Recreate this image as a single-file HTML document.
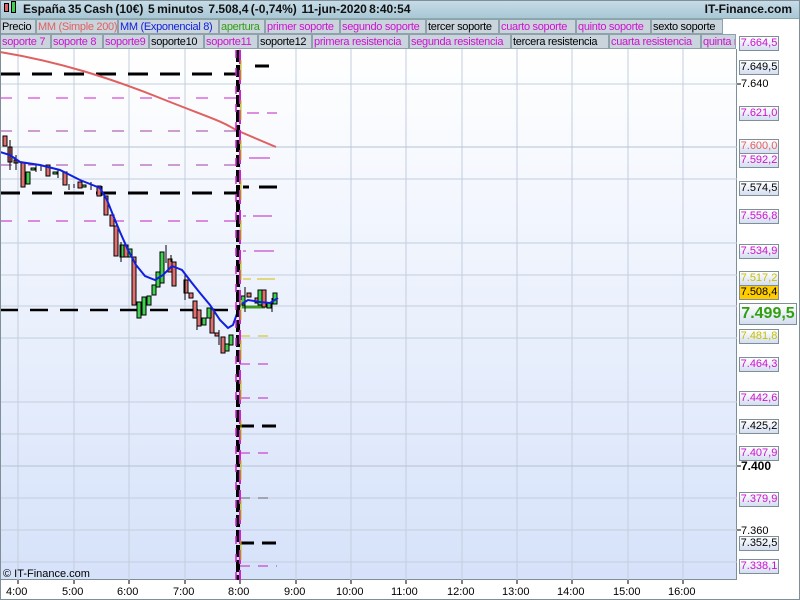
<!DOCTYPE html>
<html><head><meta charset="utf-8"><style>
*{margin:0;padding:0;box-sizing:border-box}
body{width:800px;height:600px;overflow:hidden;background:#fff;font-family:"Liberation Sans",sans-serif;position:relative}
#hdr{position:absolute;left:0;top:0;width:800px;height:19px;background:linear-gradient(#c8dde8,#a9c7d6);font-weight:bold;font-size:12px;line-height:19px;color:#111;border-bottom:1px solid #8aa}
.lg{position:absolute;height:15px;font-size:11px;line-height:14px;background:#c9d4dc;border:1px solid #8fa1ab;padding-left:1px;white-space:nowrap;overflow:hidden;letter-spacing:-0.3px}
.ax{position:absolute;left:739px;width:40px;height:15px;border:1px solid #7f8f99;background:linear-gradient(#fff,#d4def0);font-size:11px;line-height:13px;text-align:center}
.tl{position:absolute;left:741px;font-size:11px;line-height:12px}
.bt{position:absolute;top:586px;font-size:11px}
</style></head><body>
<div style="position:absolute;left:0;top:49px;width:737px;height:531px;background:linear-gradient(#ffffff,#d6e2fa);border-right:1px solid #7f8f99;border-bottom:1px solid #7f8f99"></div>
<svg style="position:absolute;left:0;top:0" width="800" height="600">
<g stroke="#c4cede" stroke-width="1">
<line x1="18" y1="49" x2="18" y2="580"/><line x1="74" y1="49" x2="74" y2="580"/><line x1="129" y1="49" x2="129" y2="580"/><line x1="185" y1="49" x2="185" y2="580"/><line x1="240" y1="49" x2="240" y2="580"/><line x1="296" y1="49" x2="296" y2="580"/><line x1="351" y1="49" x2="351" y2="580"/><line x1="406" y1="49" x2="406" y2="580"/><line x1="462" y1="49" x2="462" y2="580"/><line x1="517" y1="49" x2="517" y2="580"/><line x1="572" y1="49" x2="572" y2="580"/><line x1="628" y1="49" x2="628" y2="580"/><line x1="683" y1="49" x2="683" y2="580"/>
<line x1="0" y1="84" x2="737" y2="84"/><line x1="0" y1="147" x2="737" y2="147" stroke="#b8c2d4"/><line x1="0" y1="179" x2="737" y2="179"/><line x1="0" y1="243" x2="737" y2="243"/><line x1="0" y1="275" x2="737" y2="275"/><line x1="0" y1="306" x2="737" y2="306"/><line x1="0" y1="338" x2="737" y2="338"/><line x1="0" y1="402" x2="737" y2="402"/><line x1="0" y1="434" x2="737" y2="434"/><line x1="0" y1="466" x2="737" y2="466" stroke="#b8c2d4"/><line x1="0" y1="498" x2="737" y2="498"/><line x1="0" y1="530" x2="737" y2="530"/><line x1="0" y1="562" x2="737" y2="562"/>
</g>
<g stroke="#000" stroke-width="1"><line x1="18" y1="580" x2="18" y2="584"/><line x1="74" y1="580" x2="74" y2="584"/><line x1="129" y1="580" x2="129" y2="584"/><line x1="185" y1="580" x2="185" y2="584"/><line x1="240" y1="580" x2="240" y2="584"/><line x1="296" y1="580" x2="296" y2="584"/><line x1="351" y1="580" x2="351" y2="584"/><line x1="406" y1="580" x2="406" y2="584"/><line x1="462" y1="580" x2="462" y2="584"/><line x1="517" y1="580" x2="517" y2="584"/><line x1="572" y1="580" x2="572" y2="584"/><line x1="628" y1="580" x2="628" y2="584"/><line x1="683" y1="580" x2="683" y2="584"/></g>
<g fill="none">
<line x1="0" y1="74" x2="236" y2="74" stroke="#000" stroke-width="3" stroke-dasharray="20 12"/>
<line x1="0" y1="98" x2="236" y2="98" stroke="#d020d0" stroke-dasharray="12 16"/>
<line x1="0" y1="131" x2="236" y2="131" stroke="#a040a0" stroke-dasharray="12 16"/>
<line x1="0" y1="165" x2="236" y2="165" stroke="#a040a0" stroke-dasharray="12 16"/>
<line x1="0" y1="193" x2="236" y2="193" stroke="#000" stroke-width="3" stroke-dasharray="20 12"/>
<line x1="0" y1="221" x2="236" y2="221" stroke="#c020c0" stroke-dasharray="12 16"/>
<line x1="0" y1="310" x2="236" y2="310" stroke="#000" stroke-width="2.5" stroke-dasharray="18 12"/>
<line x1="255" y1="66" x2="277" y2="66" stroke="#000" stroke-width="3" stroke-dasharray="14 8"/>
<line x1="247" y1="113" x2="277" y2="113" stroke="#c020c0" stroke-dasharray="12 8"/>
<line x1="249" y1="158" x2="270" y2="158" stroke="#c020c0"/>
<line x1="243" y1="187" x2="277" y2="187" stroke="#000" stroke-width="3" stroke-dasharray="6 10 20 0"/>
<line x1="243" y1="216" x2="272" y2="216" stroke="#c020c0" stroke-dasharray="3 7 20 0"/>
<line x1="243" y1="251" x2="274" y2="251" stroke="#c020c0" stroke-dasharray="3 8 20 0"/>
<line x1="243" y1="279" x2="275" y2="279" stroke="#d0c000" stroke-dasharray="8 6 20 0"/>
<line x1="242" y1="307" x2="265" y2="307" stroke="#3a9a20" stroke-width="3"/>
<line x1="240" y1="336" x2="276" y2="336" stroke="#d0c000" stroke-dasharray="10 8"/>
<line x1="240" y1="364" x2="276" y2="364" stroke="#c020c0" stroke-dasharray="10 8"/>
<line x1="240" y1="398" x2="276" y2="398" stroke="#c020c0" stroke-dasharray="10 8"/>
<line x1="240" y1="426" x2="277" y2="426" stroke="#000" stroke-width="3" stroke-dasharray="14 8"/>
<line x1="240" y1="453" x2="276" y2="453" stroke="#c020c0" stroke-dasharray="10 8"/>
<line x1="240" y1="498" x2="276" y2="498" stroke="#666" stroke-dasharray="10 8"/>
<line x1="240" y1="543" x2="277" y2="543" stroke="#000" stroke-width="3" stroke-dasharray="14 8"/>
<line x1="240" y1="566" x2="277" y2="566" stroke="#c020c0" stroke-dasharray="10 8"/>
</g>
<path d="M0 52 C60 62 110 78 160 98 S 220 120 236 130 L276 147" fill="none" stroke="#e06060" stroke-width="2"/>
<g stroke="#000" stroke-width="1">
<g fill="#e07070">
<rect x="3" y="136" width="4" height="10"/><rect x="8" y="147" width="4" height="15"/><rect x="14" y="160" width="4" height="3"/><rect x="21" y="163" width="4" height="24"/><rect x="46" y="165" width="4" height="11"/><rect x="63" y="172" width="4" height="13"/><rect x="78" y="182" width="4" height="6"/><rect x="97" y="186" width="4" height="10"/><rect x="104" y="196" width="4" height="19"/><rect x="110" y="215" width="4" height="11"/><rect x="114" y="226" width="4" height="30"/><rect x="124" y="245" width="4" height="12"/><rect x="132" y="257" width="4" height="48"/><rect x="168" y="259" width="4" height="13"/><rect x="172" y="262" width="4" height="24"/><rect x="184" y="280" width="4" height="13"/><rect x="189" y="293" width="4" height="5"/><rect x="193" y="301" width="4" height="17"/><rect x="197" y="310" width="4" height="16"/><rect x="210" y="309" width="4" height="24"/><rect x="215" y="333" width="4" height="3"/><rect x="221" y="337" width="4" height="16"/><rect x="247" y="293" width="4" height="4"/><rect x="262" y="290" width="4" height="17"/><rect x="255" y="298" width="4" height="5"/></g>
<g fill="#40d050">
<rect x="26" y="172" width="4" height="12"/><rect x="31" y="168" width="4" height="2"/><rect x="53" y="172" width="4" height="2"/><rect x="82" y="185" width="4" height="2"/><rect x="120" y="245" width="4" height="12"/><rect x="128" y="249" width="4" height="8"/><rect x="137" y="302" width="4" height="16"/><rect x="142" y="297" width="4" height="18"/><rect x="147" y="296" width="4" height="9"/><rect x="152" y="285" width="4" height="10"/><rect x="156" y="272" width="4" height="15"/><rect x="160" y="252" width="4" height="31"/><rect x="202" y="318" width="4" height="7"/><rect x="207" y="308" width="4" height="10"/><rect x="225" y="344" width="4" height="7"/><rect x="229" y="335" width="4" height="10"/><rect x="241" y="296" width="4" height="9"/><rect x="258" y="290" width="4" height="15"/><rect x="267" y="303" width="4" height="5"/><rect x="273" y="293" width="4" height="11"/></g>
<path d="M10 140V170M16 155V170M36 165V172M41 166V171M58 170V178M69 184V190M74 184V188M91 182V190M102 186V196M121 242V262M137 305V318M166 245V263M171 255V262M185 275V300M197 325V330M219 330V345M245 287V312M272 298V312"/>
</g>
<path d="M0 152 L10 155 20 162 40 165 60 170 80 180 100 188 107 200 113 215 120 232 128 250 136 265 145 276 155 280 163 275 172 266 182 270 192 283 200 293 210 305 220 320 228 328 233 325 240 305 248 300 260 302 270 303 278 298" fill="none" stroke="#1020e0" stroke-width="2"/>
<line x1="238" y1="50" x2="238" y2="580" stroke="#000" stroke-width="4" stroke-dasharray="12 3"/>
<line x1="240" y1="50" x2="240" y2="580" stroke="#d020d0" stroke-width="2" stroke-dasharray="14 6"/>
<line x1="241" y1="60" x2="241" y2="580" stroke="#c8c000" stroke-width="1" stroke-dasharray="20 20"/>
<line x1="236" y1="50" x2="236" y2="580" stroke="#d020d0" stroke-width="1.5" stroke-dasharray="8 10"/>
<g stroke="#000"><line x1="737" y1="84" x2="741" y2="84"/><line x1="737" y1="466" x2="741" y2="466"/><line x1="737" y1="530" x2="741" y2="530"/></g>
</svg>
<div id="hdr"><span style="position:absolute;left:4px;top:3px;width:5px;height:9px;background:#e06060;border:1px solid #000"></span><span style="position:absolute;left:11px;top:1px;width:5px;height:12px;background:#40d050;border:1px solid #000"></span><span style="position:absolute;left:23px;word-spacing:-1px">España 35 Cash (10€)&nbsp; 5 minutos&nbsp; 7.508,4 (-0,74%)&nbsp; 11-jun-2020 8:40:54</span><span style="position:absolute;right:8px">IT-Finance.com</span></div>
<div class="lg" style="left:0;top:19px;width:36px">Precio</div>
<div class="lg" style="left:36px;top:19px;width:82px;color:#e06060">MM (Simple 200)</div>
<div class="lg" style="left:118px;top:19px;width:101px;color:#1020e0">MM (Exponencial 8)</div>
<div class="lg" style="left:219px;top:19px;width:46px;color:#30a010">apertura</div>
<div class="lg" style="left:265px;top:19px;width:75px;color:#d010d0">primer soporte</div>
<div class="lg" style="left:340px;top:19px;width:86px;color:#d010d0">segundo soporte</div>
<div class="lg" style="left:426px;top:19px;width:73px">tercer soporte</div>
<div class="lg" style="left:499px;top:19px;width:77px;color:#d010d0">cuarto soporte</div>
<div class="lg" style="left:576px;top:19px;width:75px;color:#d010d0">quinto soporte</div>
<div class="lg" style="left:651px;top:19px;width:72px">sexto soporte</div>
<div class="lg" style="left:0;top:34px;width:51px;color:#d010d0">soporte 7</div>
<div class="lg" style="left:51px;top:34px;width:52px;color:#d010d0">soporte 8</div>
<div class="lg" style="left:103px;top:34px;width:46px;color:#d010d0">soporte9</div>
<div class="lg" style="left:149px;top:34px;width:55px">soporte10</div>
<div class="lg" style="left:204px;top:34px;width:54px;color:#d010d0">soporte11</div>
<div class="lg" style="left:258px;top:34px;width:54px">soporte12</div>
<div class="lg" style="left:312px;top:34px;width:97px;color:#d010d0">primera resistencia</div>
<div class="lg" style="left:409px;top:34px;width:102px;color:#d010d0">segunda resistencia</div>
<div class="lg" style="left:511px;top:34px;width:98px">tercera resistencia</div>
<div class="lg" style="left:609px;top:34px;width:92px;color:#d010d0">cuarta resistencia</div>
<div class="lg" style="left:701px;top:34px;width:35px;color:#d010d0">quinta r</div>
<div class="tl" style="top:78px">7.640</div>
<div class="tl" style="top:460px;font-weight:bold;font-size:12px">7.400</div>
<div class="tl" style="top:525px">7.360</div>
<div class="ax" style="top:36px;color:#d010d0">7.664,5</div>
<div class="ax" style="top:60px">7.649,5</div>
<div class="ax" style="top:106px;color:#d010d0">7.621,0</div>
<div class="ax" style="top:139px;color:#e06060">7.600,0</div>
<div class="ax" style="top:153px;color:#d010d0">7.592,2</div>
<div class="ax" style="top:181px">7.574,5</div>
<div class="ax" style="top:209px;color:#d010d0">7.556,8</div>
<div class="ax" style="top:244px;color:#d010d0">7.534,9</div>
<div class="ax" style="top:271px;color:#c8c000">7.517,2</div>
<div class="ax" style="top:285px;background:#ffcc00">7.508,4</div>
<div class="ax" style="top:303px;width:58px;height:22px;font-size:16px;line-height:20px;font-weight:bold;color:#30a010">7.499,5</div>
<div class="ax" style="top:329px;color:#c8c000">7.481,8</div>
<div class="ax" style="top:357px;color:#d010d0">7.464,3</div>
<div class="ax" style="top:391px;color:#d010d0">7.442,6</div>
<div class="ax" style="top:419px">7.425,2</div>
<div class="ax" style="top:446px;color:#d010d0">7.407,9</div>
<div class="ax" style="top:492px;color:#d010d0">7.379,9</div>
<div class="ax" style="top:536px">7.352,5</div>
<div class="ax" style="top:559px;color:#d010d0">7.338,1</div>
<div style="position:absolute;left:3px;top:568px;font-size:11px">© IT-Finance.com</div>
<div class="bt" style="left:6px">4:00</div><div class="bt" style="left:62px">5:00</div><div class="bt" style="left:117px">6:00</div><div class="bt" style="left:173px">7:00</div><div class="bt" style="left:228px">8:00</div><div class="bt" style="left:284px">9:00</div><div class="bt" style="left:336px">10:00</div><div class="bt" style="left:391px">11:00</div><div class="bt" style="left:447px">12:00</div><div class="bt" style="left:502px">13:00</div><div class="bt" style="left:557px">14:00</div><div class="bt" style="left:613px">15:00</div><div class="bt" style="left:668px">16:00</div>
<div style="position:absolute;left:0;top:0;width:800px;height:600px;border:1px solid #7f8f99;pointer-events:none"></div>
</body></html>
